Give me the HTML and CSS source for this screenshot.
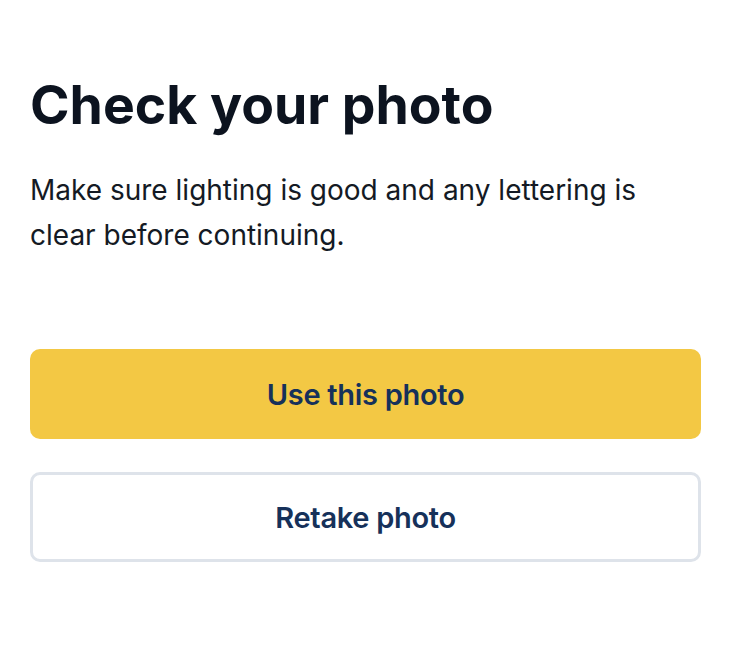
FILE: index.html
```html
<!DOCTYPE html>
<html>
<head>
<meta charset="utf-8">
<link rel="stylesheet" href="styles.css">
</head>
<body>
<main class="screen">
  <h1 class="title">Check your photo</h1>
  <p class="lead">Make sure lighting is good and any lettering is clear before continuing.</p>
  <div class="actions">
    <button class="btn btn-primary">Use this photo</button>
    <button class="btn btn-secondary">Retake photo</button>
  </div>
</main>
</body>
</html>
```

FILE: styles.css
```css
* { box-sizing: border-box; }
html, body { margin: 0; padding: 0; background: #ffffff; }
body { font-family: Inter, "Noto Sans", sans-serif; }
.screen {
  width: 732px;
  padding: 72px 31px 0 30px;
  display: flex;
  flex-direction: column;
}
.title {
  margin: 0;
  font-size: 53.5px;
  font-weight: 700;
  line-height: 66px;
  color: #0c131f;
  letter-spacing: 0;
}
.lead {
  margin: 30px 0 0;
  font-size: 28px;
  font-weight: 400;
  line-height: 45px;
  color: #141a24;
  max-width: 630px;
}
.actions {
  margin-top: 91px;
  display: flex;
  flex-direction: column;
  gap: 33px;
}
.btn {
  height: 90px;
  border-radius: 10px;
  font-family: inherit;
  font-size: 29px;
  font-weight: 600;
  color: #16315a;
  letter-spacing: -0.3px;
  cursor: pointer;
}
.btn-primary {
  background: #f3c844;
  border: none;
}
.btn-secondary {
  background: #ffffff;
  border: 3px solid #dee3ea;
}
```
